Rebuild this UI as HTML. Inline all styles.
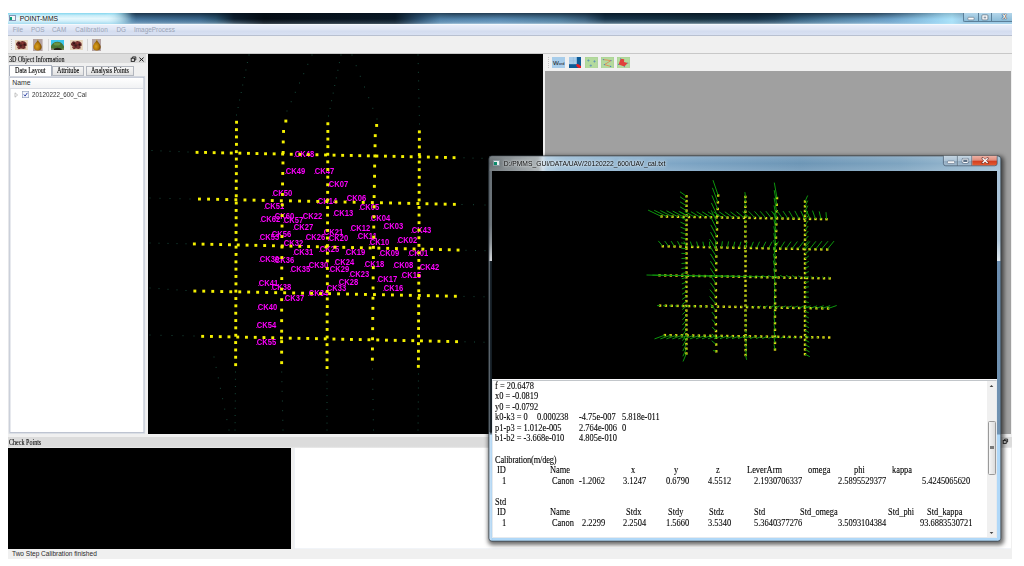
<!DOCTYPE html><html><head><meta charset="utf-8"><title>POINT-MMS</title><style>
*{margin:0;padding:0;box-sizing:border-box}
html,body{width:1024px;height:566px;overflow:hidden;background:#fff}
body{position:relative;font-family:"Liberation Sans",sans-serif;font-size:6.5px;color:#000}
.a{position:absolute}
.sf{font-family:"Liberation Serif",serif}
.t{position:absolute;white-space:pre;line-height:1;transform-origin:0 50%}
#txt span{position:absolute;white-space:pre;font-family:"Liberation Serif",serif;font-size:9.6px;line-height:10px;color:#000;-webkit-text-stroke:.1px #000;transform-origin:0 80%;transform:scaleX(.875)}

.lb i{font-style:normal;font-weight:normal;margin-right:-1.1px;margin-left:.8px}
.lb{position:absolute;white-space:pre;font-family:"Liberation Sans",sans-serif;font-size:9.1px;line-height:8px;font-weight:bold;color:#f0f;transform-origin:0 0;transform:scaleX(.835);letter-spacing:0}
</style></head><body>
<div class="a" style="left:8px;top:12.5px;width:1003.5px;height:546.5px;background:#f0f0f0"></div>
<div class="a" style="left:8px;top:12.5px;width:1003.5px;height:11.6px;background:linear-gradient(90deg,#c8ecf8 0.0px,#d8f2fa 52.0px,#c0e8f6 100.0px,#86bcd4 113.0px,#44739a 128.0px,#3a678c 192.0px,#2a5470 208.0px,#0e2030 226.0px,#050c14 256.0px,#0a1a28 387.0px,#2c5272 412.0px,#4f80a6 432.0px,#5688b0 492.0px,#4a7898 552.0px,#3a5f7c 577.0px,#17344a 597.0px,#15303f 692.0px,#17344a 747.0px,#1f4058 767.0px,#34607f 792.0px,#4f80a2 828.0px,#6aa0c8 882.0px,#98d2f0 927.0px,#aae2f9 944.0px,#9ccbe6 955.0px,#9ccbe6 1003.5px)"></div>
<div class="a" style="left:114px;top:12.5px;width:897.5px;height:11.6px;background:linear-gradient(180deg,rgba(0,10,20,.6) 0,rgba(0,10,20,.3) 25%,rgba(0,0,0,0) 55%,rgba(190,220,240,.28) 85%,rgba(225,240,250,.6) 100%);-webkit-mask-image:linear-gradient(90deg,transparent 0,#000 22px,#000 110px,rgba(0,0,0,.5) 150px,rgba(0,0,0,.5) 285px,#000 340px,#000 760px,rgba(0,0,0,.3) 830px,rgba(0,0,0,.3) 100%);mask-image:linear-gradient(90deg,transparent 0,#000 22px,#000 110px,rgba(0,0,0,.5) 150px,rgba(0,0,0,.5) 285px,#000 340px,#000 760px,rgba(0,0,0,.3) 830px,rgba(0,0,0,.3) 100%)"></div>
<div class="a" style="left:8px;top:12.5px;width:135px;height:11.6px;background:linear-gradient(180deg,#84d6ee 0,#c4ecf8 22%,#e6f7fc 50%,#d4f0fa 72%,#a6dcf0 100%);-webkit-mask-image:linear-gradient(90deg,#000 0,#000 98px,transparent 124px);mask-image:linear-gradient(90deg,#000 0,#000 98px,transparent 124px)"></div>
<div class="a" style="left:8px;top:23.7px;width:1003.5px;height:.6px;background:#9aa6ae"></div><div class="a" style="left:8px;top:24.2px;width:1003.5px;height:.5px;background:#f4f8fc"></div>
<div class="a" style="left:8.5px;top:15.2px;width:7.6px;height:6.2px;background:#f2f6f8;border:.7px solid #8492b4;border-top-width:1.1px"></div><div class="a" style="left:9.7px;top:17px;width:2.8px;height:3.4px;background:#0a9a78"></div>
<div class="t" style="left:19.8px;top:15.5px;font-size:6.75px;color:#111;text-shadow:0 0 2px #fff">POINT-MMS</div>
<div class="a" style="left:963px;top:12.8px;width:48.5px;height:9.4px;border:.5px solid #5b7f99;border-top:0;border-right:0;border-radius:0 0 0 2px;background:linear-gradient(180deg,#b4d6ea,#8cbcd8)"></div>
<div class="a" style="left:978px;top:12.8px;width:.5px;height:9.4px;background:#5b7f99"></div><div class="a" style="left:991.4px;top:12.8px;width:.5px;height:9.4px;background:#5b7f99"></div>
<svg class="a" style="left:963px;top:12.5px" width="48" height="11" viewBox="0 0 48 11"><rect x="4.9" y="4.3" width="6.2" height="2.6" rx=".8" fill="#fff" stroke="#5a6a7a" stroke-width=".6"/><rect x="18.9" y="1.9" width="6" height="5" rx=".8" fill="#fff" stroke="#5a6a7a" stroke-width=".7"/><rect x="20.6" y="3.6" width="2.6" height="1.8" fill="#8a9aaa"/></svg>
<div class="t" style="left:1002px;top:14.2px;font-size:6.6px;font-weight:bold;color:#fff;text-shadow:0 0 1px #334,0 0 1px #334,0 0 1px #334">X</div>
<div class="a" style="left:8px;top:24.5px;width:1003.5px;height:11px;background:linear-gradient(180deg,#e9eefa 0,#dde4f3 45%,#d3dcef 55%,#dbe3f4 100%)"></div>
<div class="a" style="left:8px;top:35px;width:1003.5px;height:.6px;background:#b8c0d0"></div>
<div class="t" style="left:12.7px;top:26.6px;font-size:6.4px;color:#9aa4b6">File</div>
<div class="t" style="left:31.1px;top:26.6px;font-size:6.4px;color:#9aa4b6">POS</div>
<div class="t" style="left:52px;top:26.6px;font-size:6.4px;color:#9aa4b6">CAM</div>
<div class="t" style="left:75.2px;top:26.6px;font-size:6.4px;color:#9aa4b6"><span style="letter-spacing:.2px">Calibration</span></div>
<div class="t" style="left:116.5px;top:26.6px;font-size:6.4px;color:#9aa4b6">DG</div>
<div class="t" style="left:134px;top:26.6px;font-size:6.4px;color:#9aa4b6">ImageProcess</div>
<div class="a" style="left:8px;top:53.2px;width:1003.5px;height:.6px;background:#c8c8c8"></div>
<div class="a" style="left:10.5px;top:39px;width:1px;height:12px;background:repeating-linear-gradient(180deg,#c4c4c4 0 1px,transparent 1px 2px)"></div>
<svg class="a" style="left:15.3px;top:39.8px" width="12.8" height="10" viewBox="0 0 12.8 10"><defs><filter id="bl15" x="-10%" y="-10%" width="120%" height="120%"><feGaussianBlur stdDeviation=".35"/></filter></defs><rect width="12.8" height="10" fill="#e6d4ba"/><g filter="url(#bl15)"><path d="M1.2 3.2L3 1.2L5.4 1.8L7.2 .9L9.6 1.6L11.4 3L11.8 5.4L10.2 6.6L10.8 8.2L8.4 9L6 8.4L3.8 9.2L2.2 7.8L2.8 6.2L1 5Z" fill="#6a2c2a"/><circle cx="4" cy="3.4" r="1.1" fill="#3a1818"/><circle cx="7.6" cy="3" r="1" fill="#8a3a34"/><circle cx="9.6" cy="4.6" r="1.1" fill="#351515"/><circle cx="5.6" cy="5.6" r="1.2" fill="#40201e"/><circle cx="7.8" cy="7" r="1" fill="#7a3430"/><circle cx="3.6" cy="7" r=".9" fill="#8c4038"/><circle cx="6" cy="2.6" r=".6" fill="#a05048"/><circle cx="10.4" cy="2.8" r=".5" fill="#a55"/></g></svg>
<svg class="a" style="left:33.2px;top:38.6px" width="9.6" height="12" viewBox="0 0 9.6 12"><defs><radialGradient id="pg33" cx=".4" cy=".62" r=".55"><stop offset="0" stop-color="#d9a020"/><stop offset=".6" stop-color="#b47a0a"/><stop offset="1" stop-color="#7c4c04"/></radialGradient></defs><rect width="9.6" height="12" fill="#b4a4a4"/><path d="M4.8 .9 C5.5 2.6 8.7 4.8 8.7 8 C8.7 10.4 6.9 11.5 4.8 11.5 C2.7 11.5 .9 10.4 .9 8 C.9 4.8 4.1 2.6 4.8 .9Z" fill="url(#pg33)"/><path d="M4.8 .6L4.8 2" stroke="#c8a020" stroke-width=".8"/></svg>
<svg class="a" style="left:51px;top:39.8px" width="13" height="9.8" viewBox="0 0 13 9.8"><defs><filter id="bb" x="-10%" y="-10%" width="120%" height="120%"><feGaussianBlur stdDeviation=".3"/></filter></defs><rect width="13" height="9.8" fill="#3cc6ee"/><g filter="url(#bb)"><path d="M-.5 10 L-.5 7 C.8 3.4 3.6 1.6 6.8 1.7 C10 1.8 12.6 4.4 13.5 7.6 L13.5 10Z" fill="#4a7434"/><ellipse cx="6" cy="4" rx="3.4" ry="1.5" fill="#6a9444"/><path d="M2.4 10 C3.4 7.2 9.4 7 11 10Z" fill="#2a2018"/><path d="M-.5 10L-.5 8.2L2.4 8.6L3 10Z" fill="#8a8878"/><path d="M10.5 10L11.4 8.4L13.5 8.2L13.5 10Z" fill="#7a8a5a"/></g></svg>
<svg class="a" style="left:70.4px;top:39.8px" width="12.8" height="10" viewBox="0 0 12.8 10"><defs><filter id="bl70" x="-10%" y="-10%" width="120%" height="120%"><feGaussianBlur stdDeviation=".35"/></filter></defs><rect width="12.8" height="10" fill="#e6d4ba"/><g filter="url(#bl70)"><path d="M1.2 3.2L3 1.2L5.4 1.8L7.2 .9L9.6 1.6L11.4 3L11.8 5.4L10.2 6.6L10.8 8.2L8.4 9L6 8.4L3.8 9.2L2.2 7.8L2.8 6.2L1 5Z" fill="#6a2c2a"/><circle cx="4" cy="3.4" r="1.1" fill="#3a1818"/><circle cx="7.6" cy="3" r="1" fill="#8a3a34"/><circle cx="9.6" cy="4.6" r="1.1" fill="#351515"/><circle cx="5.6" cy="5.6" r="1.2" fill="#40201e"/><circle cx="7.8" cy="7" r="1" fill="#7a3430"/><circle cx="3.6" cy="7" r=".9" fill="#8c4038"/><circle cx="6" cy="2.6" r=".6" fill="#a05048"/><circle cx="10.4" cy="2.8" r=".5" fill="#a55"/></g></svg>
<svg class="a" style="left:91.6px;top:38.6px" width="9.6" height="12" viewBox="0 0 9.6 12"><defs><radialGradient id="pg91" cx=".4" cy=".62" r=".55"><stop offset="0" stop-color="#d9a020"/><stop offset=".6" stop-color="#b47a0a"/><stop offset="1" stop-color="#7c4c04"/></radialGradient></defs><rect width="9.6" height="12" fill="#b4a4a4"/><path d="M4.8 .9 C5.5 2.6 8.7 4.8 8.7 8 C8.7 10.4 6.9 11.5 4.8 11.5 C2.7 11.5 .9 10.4 .9 8 C.9 4.8 4.1 2.6 4.8 .9Z" fill="url(#pg91)"/><path d="M4.8 .6L4.8 2" stroke="#c8a020" stroke-width=".8"/></svg>
<div class="a" style="left:47.5px;top:39px;width:.6px;height:12px;background:#d4d4d4"></div>
<div class="a" style="left:87px;top:39px;width:.6px;height:12px;background:#d4d4d4"></div>
<div class="a" style="left:8px;top:53.8px;width:138.4px;height:9.6px;background:#dddddd"></div>
<div class="t sf" style="left:9.4px;top:57px;font-size:7.2px;transform:scaleX(.845);color:#000;-webkit-text-stroke:.08px #000">3D Object Information</div>
<svg class="a" style="left:130px;top:55.5px" width="15" height="7" viewBox="0 0 15 7"><rect x="1.2" y="2.2" width="3.2" height="3.2" fill="none" stroke="#222" stroke-width=".9"/><path d="M2.6 2.2V.9H5.8V4H4.4" fill="none" stroke="#222" stroke-width=".9"/><path d="M9.4 1.6L13.6 5.4M13.6 1.6L9.4 5.4" stroke="#111" stroke-width=".95"/></svg>
<div class="a" style="left:8.8px;top:64.8px;width:43px;height:12px;background:#fff;border:.6px solid #a9b0bd;border-bottom:0"></div>
<div class="a" style="left:52.4px;top:66.2px;width:32px;height:9.4px;background:linear-gradient(#f6f6f6,#e2e2e2);border:.6px solid #b2b6be"></div>
<div class="a" style="left:85.8px;top:66.2px;width:47.8px;height:9.4px;background:linear-gradient(#f6f6f6,#e2e2e2);border:.6px solid #b2b6be"></div>
<div class="t sf" style="left:14.5px;top:66.7px;font-size:7.6px;transform:scaleX(.81);color:#000;-webkit-text-stroke:.12px #000">Data Layout</div>
<div class="t sf" style="left:57.2px;top:67.1px;font-size:7.6px;transform:scaleX(.81);color:#000;-webkit-text-stroke:.12px #000">Attritube</div>
<div class="t sf" style="left:91.4px;top:67.1px;font-size:7.6px;transform:scaleX(.795);color:#000;-webkit-text-stroke:.12px #000">Analysis Points</div>
<svg class="a" style="left:0;top:0" width="160" height="440" viewBox="0 0 160 440"><rect x="9.1" y="76.5" width="135.6" height="356.8" fill="#fff" stroke="#d3d8e1" stroke-width=".9"/><rect x="9.9" y="77.3" width="134" height="355.2" fill="#fff" stroke="#aeb6c6" stroke-width=".8"/></svg>
<div class="a" style="left:10.4px;top:77.8px;width:133px;height:10.8px;background:linear-gradient(#fff,#f1f2f4);border-bottom:.6px solid #d9dce3"></div>
<div class="t" style="left:12.3px;top:79.6px;font-size:6.9px;color:#333">Name</div>
<svg class="a" style="left:13.5px;top:91.5px" width="5" height="6" viewBox="0 0 5 6"><path d="M1 .8L3.6 3L1 5.2Z" fill="#fff" stroke="#a0a0a0" stroke-width=".6"/></svg>
<svg class="a" style="left:21px;top:90px" width="9" height="9" viewBox="0 0 9 9"><rect x="1.3" y="1.3" width="6.4" height="6.4" fill="#e9eef7" stroke="#8e9cb6" stroke-width=".6"/><rect x="2.2" y="2.2" width="4.6" height="4.6" fill="#f6f8fc"/></svg>
<svg class="a" style="left:22px;top:91px" width="7" height="7" viewBox="0 0 7 7"><path d="M1.9 3.5L3.1 5.1L5.3 1.9" fill="none" stroke="#2a3fa8" stroke-width=".95"/></svg>
<div class="t" style="left:32.2px;top:90.9px;font-size:7px;transform:scaleX(.895);color:#333">20120222_600_Cal</div>
<div class="a" style="left:148.2px;top:54px;width:395px;height:379.6px;background:#000;overflow:hidden" id="v3d">
<div class="a" style="left:0;top:0;width:395px;height:379.6px;will-change:transform"><div class="lb" style="left:145.4px;top:96.1px"><i>.</i>CK48</div><div class="lb" style="left:136.4px;top:113.3px"><i>.</i>CK49</div><div class="lb" style="left:164.5px;top:113.3px"><i>.</i>CK47</div><div class="lb" style="left:179.1px;top:125.9px"><i>.</i>CK07</div><div class="lb" style="left:123.1px;top:134.8px"><i>.</i>CK50</div><div class="lb" style="left:167.7px;top:142.8px"><i>.</i>CK14</div><div class="lb" style="left:115.2px;top:148.2px"><i>.</i>CK51</div><div class="lb" style="left:152.6px;top:157.7px"><i>.</i>CK22</div><div class="lb" style="left:183.6px;top:155.4px"><i>.</i>CK13</div><div class="lb" style="left:111.1px;top:160.8px"><i>.</i>CK62</div><div class="lb" style="left:125.0px;top:158.4px"><i>.</i>CK60</div><div class="lb" style="left:134.0px;top:161.6px"><i>.</i>CK57</div><div class="lb" style="left:144.4px;top:169.1px"><i>.</i>CK27</div><div class="lb" style="left:174.3px;top:173.8px"><i>.</i>CK21</div><div class="lb" style="left:121.8px;top:175.9px"><i>.</i>CK56</div><div class="lb" style="left:110.4px;top:178.8px"><i>.</i>CK53</div><div class="lb" style="left:156.0px;top:178.8px"><i>.</i>CK26</div><div class="lb" style="left:179.1px;top:179.9px"><i>.</i>CK20</div><div class="lb" style="left:133.8px;top:184.8px"><i>.</i>CK32</div><div class="lb" style="left:144.0px;top:193.8px"><i>.</i>CK31</div><div class="lb" style="left:169.8px;top:191.4px"><i>.</i>CK25</div><div class="lb" style="left:110.1px;top:200.9px"><i>.</i>CK39</div><div class="lb" style="left:124.6px;top:201.6px"><i>.</i>CK36</div><div class="lb" style="left:158.9px;top:207.1px"><i>.</i>CK30</div><div class="lb" style="left:140.7px;top:211.1px"><i>.</i>CK35</div><div class="lb" style="left:180.1px;top:211.2px"><i>.</i>CK29</div><div class="lb" style="left:185.4px;top:204.1px"><i>.</i>CK24</div><div class="lb" style="left:108.7px;top:225.4px"><i>.</i>CK41</div><div class="lb" style="left:122.3px;top:228.9px"><i>.</i>CK38</div><div class="lb" style="left:177.3px;top:229.6px"><i>.</i>CK33</div><div class="lb" style="left:188.7px;top:224.2px"><i>.</i>CK28</div><div class="lb" style="left:159.4px;top:234.9px"><i>.</i>CK34</div><div class="lb" style="left:134.5px;top:240.4px"><i>.</i>CK37</div><div class="lb" style="left:108.0px;top:249.1px"><i>.</i>CK40</div><div class="lb" style="left:107.1px;top:267.2px"><i>.</i>CK54</div><div class="lb" style="left:106.9px;top:284.1px"><i>.</i>CK55</div><div class="lb" style="left:196.9px;top:139.8px"><i>.</i>CK06</div><div class="lb" style="left:210.2px;top:149.3px"><i>.</i>CK05</div><div class="lb" style="left:221.1px;top:160.1px"><i>.</i>CK04</div><div class="lb" style="left:201.0px;top:169.6px"><i>.</i>CK12</div><div class="lb" style="left:233.5px;top:168.4px"><i>.</i>CK03</div><div class="lb" style="left:262.4px;top:172.2px"><i>.</i>CK43</div><div class="lb" style="left:208.4px;top:178.1px"><i>.</i>CK11</div><div class="lb" style="left:219.7px;top:184.2px"><i>.</i>CK10</div><div class="lb" style="left:248.1px;top:181.8px"><i>.</i>CK02</div><div class="lb" style="left:195.6px;top:193.6px"><i>.</i>CK19</div><div class="lb" style="left:230.1px;top:194.7px"><i>.</i>CK09</div><div class="lb" style="left:258.8px;top:194.7px"><i>.</i>CK01</div><div class="lb" style="left:214.6px;top:205.6px"><i>.</i>CK18</div><div class="lb" style="left:244.1px;top:206.6px"><i>.</i>CK08</div><div class="lb" style="left:270.1px;top:209.2px"><i>.</i>CK42</div><div class="lb" style="left:200.4px;top:215.9px"><i>.</i>CK23</div><div class="lb" style="left:252.1px;top:216.9px"><i>.</i>CK15</div><div class="lb" style="left:227.7px;top:220.9px"><i>.</i>CK17</div><div class="lb" style="left:234.1px;top:229.6px"><i>.</i>CK16</div></div>
<svg class="a" style="left:-148.2px;top:-54px" width="1024" height="566" viewBox="0 0 1024 566">
<g fill="#f4f000"><rect x="195.6" y="150.9" width="2.9" height="2.9"/><rect x="204.1" y="151.0" width="2.9" height="2.9"/><rect x="212.7" y="151.2" width="2.9" height="2.9"/><rect x="221.2" y="151.4" width="2.9" height="2.9"/><rect x="229.8" y="151.6" width="2.9" height="2.9"/><rect x="238.4" y="151.7" width="2.9" height="2.9"/><rect x="247.0" y="151.9" width="2.9" height="2.9"/><rect x="255.5" y="152.1" width="2.9" height="2.9"/><rect x="264.1" y="152.3" width="2.9" height="2.9"/><rect x="272.7" y="152.4" width="2.9" height="2.9"/><rect x="281.2" y="152.6" width="2.9" height="2.9"/><rect x="289.8" y="152.8" width="2.9" height="2.9"/><rect x="298.4" y="153.0" width="2.9" height="2.9"/><rect x="306.9" y="153.1" width="2.9" height="2.9"/><rect x="315.5" y="153.3" width="2.9" height="2.9"/><rect x="324.1" y="153.5" width="2.9" height="2.9"/><rect x="332.6" y="153.7" width="2.9" height="2.9"/><rect x="341.2" y="153.9" width="2.9" height="2.9"/><rect x="349.8" y="154.0" width="2.9" height="2.9"/><rect x="358.3" y="154.2" width="2.9" height="2.9"/><rect x="366.9" y="154.4" width="2.9" height="2.9"/><rect x="375.4" y="154.6" width="2.9" height="2.9"/><rect x="384.0" y="154.7" width="2.9" height="2.9"/><rect x="392.6" y="154.9" width="2.9" height="2.9"/><rect x="401.2" y="155.1" width="2.9" height="2.9"/><rect x="409.7" y="155.3" width="2.9" height="2.9"/><rect x="418.3" y="155.4" width="2.9" height="2.9"/><rect x="426.9" y="155.6" width="2.9" height="2.9"/><rect x="435.4" y="155.8" width="2.9" height="2.9"/><rect x="444.0" y="156.0" width="2.9" height="2.9"/><rect x="452.6" y="156.2" width="2.9" height="2.9"/><rect x="198.0" y="197.6" width="2.9" height="2.9"/><rect x="207.1" y="197.7" width="2.9" height="2.9"/><rect x="216.2" y="197.9" width="2.9" height="2.9"/><rect x="225.3" y="198.1" width="2.9" height="2.9"/><rect x="234.4" y="198.3" width="2.9" height="2.9"/><rect x="243.5" y="198.5" width="2.9" height="2.9"/><rect x="252.6" y="198.7" width="2.9" height="2.9"/><rect x="261.7" y="198.9" width="2.9" height="2.9"/><rect x="270.8" y="199.1" width="2.9" height="2.9"/><rect x="279.9" y="199.3" width="2.9" height="2.9"/><rect x="289.0" y="199.4" width="2.9" height="2.9"/><rect x="298.1" y="199.6" width="2.9" height="2.9"/><rect x="307.2" y="199.8" width="2.9" height="2.9"/><rect x="316.3" y="200.0" width="2.9" height="2.9"/><rect x="325.4" y="200.2" width="2.9" height="2.9"/><rect x="334.5" y="200.4" width="2.9" height="2.9"/><rect x="343.6" y="200.6" width="2.9" height="2.9"/><rect x="352.7" y="200.8" width="2.9" height="2.9"/><rect x="361.8" y="201.0" width="2.9" height="2.9"/><rect x="370.9" y="201.1" width="2.9" height="2.9"/><rect x="380.0" y="201.3" width="2.9" height="2.9"/><rect x="389.1" y="201.5" width="2.9" height="2.9"/><rect x="398.2" y="201.7" width="2.9" height="2.9"/><rect x="407.3" y="201.9" width="2.9" height="2.9"/><rect x="416.4" y="202.1" width="2.9" height="2.9"/><rect x="425.5" y="202.3" width="2.9" height="2.9"/><rect x="434.6" y="202.5" width="2.9" height="2.9"/><rect x="443.7" y="202.7" width="2.9" height="2.9"/><rect x="452.9" y="202.9" width="2.9" height="2.9"/><rect x="192.9" y="242.5" width="2.9" height="2.9"/><rect x="201.6" y="242.7" width="2.9" height="2.9"/><rect x="210.4" y="242.9" width="2.9" height="2.9"/><rect x="219.2" y="243.1" width="2.9" height="2.9"/><rect x="228.0" y="243.3" width="2.9" height="2.9"/><rect x="236.8" y="243.5" width="2.9" height="2.9"/><rect x="245.6" y="243.7" width="2.9" height="2.9"/><rect x="254.4" y="243.9" width="2.9" height="2.9"/><rect x="263.2" y="244.1" width="2.9" height="2.9"/><rect x="272.0" y="244.3" width="2.9" height="2.9"/><rect x="280.8" y="244.5" width="2.9" height="2.9"/><rect x="289.5" y="244.7" width="2.9" height="2.9"/><rect x="298.3" y="244.9" width="2.9" height="2.9"/><rect x="307.1" y="245.1" width="2.9" height="2.9"/><rect x="315.9" y="245.3" width="2.9" height="2.9"/><rect x="324.7" y="245.5" width="2.9" height="2.9"/><rect x="333.5" y="245.7" width="2.9" height="2.9"/><rect x="342.3" y="245.9" width="2.9" height="2.9"/><rect x="351.1" y="246.1" width="2.9" height="2.9"/><rect x="359.9" y="246.3" width="2.9" height="2.9"/><rect x="368.7" y="246.5" width="2.9" height="2.9"/><rect x="377.4" y="246.7" width="2.9" height="2.9"/><rect x="386.2" y="246.9" width="2.9" height="2.9"/><rect x="395.0" y="247.1" width="2.9" height="2.9"/><rect x="403.8" y="247.3" width="2.9" height="2.9"/><rect x="412.6" y="247.5" width="2.9" height="2.9"/><rect x="421.4" y="247.7" width="2.9" height="2.9"/><rect x="430.2" y="247.9" width="2.9" height="2.9"/><rect x="439.0" y="248.1" width="2.9" height="2.9"/><rect x="447.8" y="248.3" width="2.9" height="2.9"/><rect x="456.6" y="248.6" width="2.9" height="2.9"/><rect x="193.4" y="289.6" width="2.9" height="2.9"/><rect x="202.3" y="289.7" width="2.9" height="2.9"/><rect x="211.3" y="289.9" width="2.9" height="2.9"/><rect x="220.3" y="290.1" width="2.9" height="2.9"/><rect x="229.3" y="290.3" width="2.9" height="2.9"/><rect x="238.3" y="290.4" width="2.9" height="2.9"/><rect x="247.2" y="290.6" width="2.9" height="2.9"/><rect x="256.2" y="290.8" width="2.9" height="2.9"/><rect x="265.2" y="291.0" width="2.9" height="2.9"/><rect x="274.2" y="291.2" width="2.9" height="2.9"/><rect x="283.2" y="291.3" width="2.9" height="2.9"/><rect x="292.2" y="291.5" width="2.9" height="2.9"/><rect x="301.1" y="291.7" width="2.9" height="2.9"/><rect x="310.1" y="291.9" width="2.9" height="2.9"/><rect x="319.1" y="292.1" width="2.9" height="2.9"/><rect x="328.1" y="292.2" width="2.9" height="2.9"/><rect x="337.1" y="292.4" width="2.9" height="2.9"/><rect x="346.1" y="292.6" width="2.9" height="2.9"/><rect x="355.0" y="292.8" width="2.9" height="2.9"/><rect x="364.0" y="293.0" width="2.9" height="2.9"/><rect x="373.0" y="293.1" width="2.9" height="2.9"/><rect x="382.0" y="293.3" width="2.9" height="2.9"/><rect x="391.0" y="293.5" width="2.9" height="2.9"/><rect x="400.0" y="293.7" width="2.9" height="2.9"/><rect x="408.9" y="293.9" width="2.9" height="2.9"/><rect x="417.9" y="294.0" width="2.9" height="2.9"/><rect x="426.9" y="294.2" width="2.9" height="2.9"/><rect x="435.9" y="294.4" width="2.9" height="2.9"/><rect x="444.9" y="294.6" width="2.9" height="2.9"/><rect x="453.9" y="294.8" width="2.9" height="2.9"/><rect x="201.2" y="334.9" width="2.9" height="2.9"/><rect x="210.0" y="335.0" width="2.9" height="2.9"/><rect x="218.8" y="335.2" width="2.9" height="2.9"/><rect x="227.5" y="335.4" width="2.9" height="2.9"/><rect x="236.3" y="335.6" width="2.9" height="2.9"/><rect x="245.0" y="335.8" width="2.9" height="2.9"/><rect x="253.8" y="335.9" width="2.9" height="2.9"/><rect x="262.5" y="336.1" width="2.9" height="2.9"/><rect x="271.3" y="336.3" width="2.9" height="2.9"/><rect x="280.0" y="336.5" width="2.9" height="2.9"/><rect x="288.8" y="336.7" width="2.9" height="2.9"/><rect x="297.5" y="336.9" width="2.9" height="2.9"/><rect x="306.3" y="337.0" width="2.9" height="2.9"/><rect x="315.0" y="337.2" width="2.9" height="2.9"/><rect x="323.8" y="337.4" width="2.9" height="2.9"/><rect x="332.5" y="337.6" width="2.9" height="2.9"/><rect x="341.3" y="337.8" width="2.9" height="2.9"/><rect x="350.0" y="338.0" width="2.9" height="2.9"/><rect x="358.8" y="338.1" width="2.9" height="2.9"/><rect x="367.5" y="338.3" width="2.9" height="2.9"/><rect x="376.3" y="338.5" width="2.9" height="2.9"/><rect x="385.0" y="338.7" width="2.9" height="2.9"/><rect x="393.8" y="338.9" width="2.9" height="2.9"/><rect x="402.5" y="339.1" width="2.9" height="2.9"/><rect x="411.3" y="339.2" width="2.9" height="2.9"/><rect x="420.0" y="339.4" width="2.9" height="2.9"/><rect x="428.8" y="339.6" width="2.9" height="2.9"/><rect x="437.5" y="339.8" width="2.9" height="2.9"/><rect x="446.3" y="340.0" width="2.9" height="2.9"/><rect x="455.1" y="340.2" width="2.9" height="2.9"/><rect x="235.1" y="120.8" width="2.9" height="2.9"/><rect x="235.0" y="128.2" width="2.9" height="2.9"/><rect x="235.0" y="135.5" width="2.9" height="2.9"/><rect x="235.0" y="142.9" width="2.9" height="2.9"/><rect x="234.9" y="150.2" width="2.9" height="2.9"/><rect x="234.9" y="157.6" width="2.9" height="2.9"/><rect x="234.9" y="164.9" width="2.9" height="2.9"/><rect x="234.9" y="172.2" width="2.9" height="2.9"/><rect x="234.8" y="179.6" width="2.9" height="2.9"/><rect x="234.8" y="186.9" width="2.9" height="2.9"/><rect x="234.8" y="194.3" width="2.9" height="2.9"/><rect x="234.8" y="201.6" width="2.9" height="2.9"/><rect x="234.7" y="209.0" width="2.9" height="2.9"/><rect x="234.7" y="216.3" width="2.9" height="2.9"/><rect x="234.7" y="223.6" width="2.9" height="2.9"/><rect x="234.6" y="231.0" width="2.9" height="2.9"/><rect x="234.6" y="238.3" width="2.9" height="2.9"/><rect x="234.6" y="245.7" width="2.9" height="2.9"/><rect x="234.6" y="253.0" width="2.9" height="2.9"/><rect x="234.5" y="260.4" width="2.9" height="2.9"/><rect x="234.5" y="267.7" width="2.9" height="2.9"/><rect x="234.5" y="275.0" width="2.9" height="2.9"/><rect x="234.5" y="282.4" width="2.9" height="2.9"/><rect x="234.4" y="289.7" width="2.9" height="2.9"/><rect x="234.4" y="297.1" width="2.9" height="2.9"/><rect x="234.4" y="304.4" width="2.9" height="2.9"/><rect x="234.3" y="311.8" width="2.9" height="2.9"/><rect x="234.3" y="319.1" width="2.9" height="2.9"/><rect x="234.3" y="326.4" width="2.9" height="2.9"/><rect x="234.3" y="333.8" width="2.9" height="2.9"/><rect x="234.2" y="341.1" width="2.9" height="2.9"/><rect x="234.2" y="348.5" width="2.9" height="2.9"/><rect x="234.2" y="355.8" width="2.9" height="2.9"/><rect x="234.2" y="363.2" width="2.9" height="2.9"/><rect x="284.4" y="119.6" width="2.9" height="2.9"/><rect x="282.1" y="130.0" width="2.9" height="2.9"/><rect x="281.8" y="140.5" width="2.9" height="2.9"/><rect x="281.7" y="151.0" width="2.9" height="2.9"/><rect x="281.5" y="161.5" width="2.9" height="2.9"/><rect x="281.3" y="172.0" width="2.9" height="2.9"/><rect x="281.1" y="182.5" width="2.9" height="2.9"/><rect x="281.0" y="193.0" width="2.9" height="2.9"/><rect x="280.9" y="203.5" width="2.9" height="2.9"/><rect x="280.7" y="214.1" width="2.9" height="2.9"/><rect x="280.6" y="224.6" width="2.9" height="2.9"/><rect x="280.5" y="235.1" width="2.9" height="2.9"/><rect x="280.5" y="245.6" width="2.9" height="2.9"/><rect x="280.4" y="256.1" width="2.9" height="2.9"/><rect x="280.3" y="266.6" width="2.9" height="2.9"/><rect x="280.3" y="277.1" width="2.9" height="2.9"/><rect x="280.2" y="287.7" width="2.9" height="2.9"/><rect x="280.2" y="298.2" width="2.9" height="2.9"/><rect x="280.2" y="308.7" width="2.9" height="2.9"/><rect x="280.2" y="319.2" width="2.9" height="2.9"/><rect x="280.2" y="329.7" width="2.9" height="2.9"/><rect x="280.2" y="340.2" width="2.9" height="2.9"/><rect x="280.2" y="350.7" width="2.9" height="2.9"/><rect x="280.2" y="361.2" width="2.9" height="2.9"/><rect x="326.4" y="122.3" width="2.9" height="2.9"/><rect x="326.4" y="130.0" width="2.9" height="2.9"/><rect x="326.4" y="137.6" width="2.9" height="2.9"/><rect x="326.4" y="145.2" width="2.9" height="2.9"/><rect x="326.3" y="152.8" width="2.9" height="2.9"/><rect x="326.3" y="160.4" width="2.9" height="2.9"/><rect x="326.3" y="168.0" width="2.9" height="2.9"/><rect x="326.3" y="175.7" width="2.9" height="2.9"/><rect x="326.2" y="183.3" width="2.9" height="2.9"/><rect x="326.2" y="190.9" width="2.9" height="2.9"/><rect x="326.2" y="198.5" width="2.9" height="2.9"/><rect x="326.1" y="206.1" width="2.9" height="2.9"/><rect x="326.1" y="213.7" width="2.9" height="2.9"/><rect x="326.1" y="221.4" width="2.9" height="2.9"/><rect x="326.1" y="229.0" width="2.9" height="2.9"/><rect x="326.0" y="236.6" width="2.9" height="2.9"/><rect x="326.0" y="244.2" width="2.9" height="2.9"/><rect x="326.0" y="251.8" width="2.9" height="2.9"/><rect x="325.9" y="259.4" width="2.9" height="2.9"/><rect x="325.9" y="267.0" width="2.9" height="2.9"/><rect x="325.9" y="274.7" width="2.9" height="2.9"/><rect x="325.9" y="282.3" width="2.9" height="2.9"/><rect x="325.8" y="289.9" width="2.9" height="2.9"/><rect x="325.8" y="297.5" width="2.9" height="2.9"/><rect x="325.8" y="305.1" width="2.9" height="2.9"/><rect x="325.7" y="312.7" width="2.9" height="2.9"/><rect x="325.7" y="320.4" width="2.9" height="2.9"/><rect x="325.7" y="328.0" width="2.9" height="2.9"/><rect x="325.7" y="335.6" width="2.9" height="2.9"/><rect x="325.6" y="343.2" width="2.9" height="2.9"/><rect x="325.6" y="350.8" width="2.9" height="2.9"/><rect x="325.6" y="358.4" width="2.9" height="2.9"/><rect x="325.6" y="366.1" width="2.9" height="2.9"/><rect x="375.2" y="124.0" width="2.9" height="2.9"/><rect x="373.8" y="134.2" width="2.9" height="2.9"/><rect x="373.6" y="144.3" width="2.9" height="2.9"/><rect x="373.4" y="154.5" width="2.9" height="2.9"/><rect x="373.2" y="164.6" width="2.9" height="2.9"/><rect x="373.1" y="174.8" width="2.9" height="2.9"/><rect x="372.9" y="184.9" width="2.9" height="2.9"/><rect x="372.7" y="195.1" width="2.9" height="2.9"/><rect x="372.6" y="205.3" width="2.9" height="2.9"/><rect x="372.5" y="215.4" width="2.9" height="2.9"/><rect x="372.3" y="225.6" width="2.9" height="2.9"/><rect x="372.2" y="235.7" width="2.9" height="2.9"/><rect x="372.0" y="245.9" width="2.9" height="2.9"/><rect x="371.9" y="256.1" width="2.9" height="2.9"/><rect x="371.8" y="266.2" width="2.9" height="2.9"/><rect x="371.7" y="276.4" width="2.9" height="2.9"/><rect x="371.6" y="286.5" width="2.9" height="2.9"/><rect x="371.5" y="296.7" width="2.9" height="2.9"/><rect x="371.4" y="306.9" width="2.9" height="2.9"/><rect x="371.3" y="317.0" width="2.9" height="2.9"/><rect x="371.2" y="327.2" width="2.9" height="2.9"/><rect x="371.1" y="337.3" width="2.9" height="2.9"/><rect x="371.0" y="347.5" width="2.9" height="2.9"/><rect x="370.9" y="357.7" width="2.9" height="2.9"/><rect x="417.9" y="130.4" width="2.9" height="2.9"/><rect x="417.9" y="137.9" width="2.9" height="2.9"/><rect x="417.9" y="145.5" width="2.9" height="2.9"/><rect x="417.9" y="153.1" width="2.9" height="2.9"/><rect x="417.8" y="160.6" width="2.9" height="2.9"/><rect x="417.8" y="168.2" width="2.9" height="2.9"/><rect x="417.8" y="175.8" width="2.9" height="2.9"/><rect x="417.7" y="183.3" width="2.9" height="2.9"/><rect x="417.7" y="190.9" width="2.9" height="2.9"/><rect x="417.7" y="198.5" width="2.9" height="2.9"/><rect x="417.6" y="206.0" width="2.9" height="2.9"/><rect x="417.6" y="213.6" width="2.9" height="2.9"/><rect x="417.6" y="221.2" width="2.9" height="2.9"/><rect x="417.5" y="228.7" width="2.9" height="2.9"/><rect x="417.5" y="236.3" width="2.9" height="2.9"/><rect x="417.5" y="243.9" width="2.9" height="2.9"/><rect x="417.4" y="251.4" width="2.9" height="2.9"/><rect x="417.4" y="259.0" width="2.9" height="2.9"/><rect x="417.4" y="266.6" width="2.9" height="2.9"/><rect x="417.3" y="274.1" width="2.9" height="2.9"/><rect x="417.3" y="281.7" width="2.9" height="2.9"/><rect x="417.3" y="289.3" width="2.9" height="2.9"/><rect x="417.2" y="296.8" width="2.9" height="2.9"/><rect x="417.2" y="304.4" width="2.9" height="2.9"/><rect x="417.2" y="312.0" width="2.9" height="2.9"/><rect x="417.1" y="319.5" width="2.9" height="2.9"/><rect x="417.1" y="327.1" width="2.9" height="2.9"/><rect x="417.1" y="334.7" width="2.9" height="2.9"/><rect x="417.0" y="342.2" width="2.9" height="2.9"/><rect x="417.0" y="349.8" width="2.9" height="2.9"/><rect x="417.0" y="357.4" width="2.9" height="2.9"/><rect x="416.9" y="364.9" width="2.9" height="2.9"/></g>
<g fill="#17483a"><rect x="235.0" y="371.5" width="1" height="1"/><rect x="234.9" y="378.8" width="1" height="1"/><rect x="234.9" y="386.0" width="1" height="1"/><rect x="234.8" y="393.2" width="1" height="1"/><rect x="234.8" y="400.5" width="1" height="1"/><rect x="234.7" y="407.8" width="1" height="1"/><rect x="234.6" y="415.0" width="1" height="1"/><rect x="234.6" y="422.2" width="1" height="1"/><rect x="234.5" y="429.5" width="1" height="1"/><rect x="281.2" y="371.5" width="1" height="1"/><rect x="281.4" y="381.2" width="1" height="1"/><rect x="281.6" y="390.8" width="1" height="1"/><rect x="281.9" y="400.5" width="1" height="1"/><rect x="282.1" y="410.2" width="1" height="1"/><rect x="282.3" y="419.8" width="1" height="1"/><rect x="282.5" y="429.5" width="1" height="1"/><rect x="326.5" y="374.5" width="1" height="1"/><rect x="326.5" y="381.4" width="1" height="1"/><rect x="326.5" y="388.2" width="1" height="1"/><rect x="326.5" y="395.1" width="1" height="1"/><rect x="326.5" y="402.0" width="1" height="1"/><rect x="326.5" y="408.9" width="1" height="1"/><rect x="326.5" y="415.8" width="1" height="1"/><rect x="326.5" y="422.6" width="1" height="1"/><rect x="326.5" y="429.5" width="1" height="1"/><rect x="372.0" y="368.5" width="1" height="1"/><rect x="372.2" y="378.7" width="1" height="1"/><rect x="372.3" y="388.8" width="1" height="1"/><rect x="372.5" y="399.0" width="1" height="1"/><rect x="372.7" y="409.2" width="1" height="1"/><rect x="372.8" y="419.3" width="1" height="1"/><rect x="373.0" y="429.5" width="1" height="1"/><rect x="418.0" y="373.5" width="1" height="1"/><rect x="417.9" y="380.5" width="1" height="1"/><rect x="417.9" y="387.5" width="1" height="1"/><rect x="417.8" y="394.5" width="1" height="1"/><rect x="417.8" y="401.5" width="1" height="1"/><rect x="417.7" y="408.5" width="1" height="1"/><rect x="417.6" y="415.5" width="1" height="1"/><rect x="417.6" y="422.5" width="1" height="1"/><rect x="417.5" y="429.5" width="1" height="1"/><rect x="213.5" y="356.5" width="1" height="1"/><rect x="215.6" y="366.9" width="1" height="1"/><rect x="217.8" y="377.4" width="1" height="1"/><rect x="219.9" y="387.8" width="1" height="1"/><rect x="222.1" y="398.2" width="1" height="1"/><rect x="224.2" y="408.6" width="1" height="1"/><rect x="226.4" y="419.1" width="1" height="1"/><rect x="228.5" y="429.5" width="1" height="1"/><rect x="236.0" y="114.5" width="1" height="1"/><rect x="237.6" y="107.0" width="1" height="1"/><rect x="239.1" y="99.5" width="1" height="1"/><rect x="240.7" y="92.0" width="1" height="1"/><rect x="242.2" y="84.5" width="1" height="1"/><rect x="243.8" y="77.0" width="1" height="1"/><rect x="245.4" y="69.5" width="1" height="1"/><rect x="246.9" y="62.0" width="1" height="1"/><rect x="248.5" y="54.5" width="1" height="1"/><rect x="286.5" y="110.5" width="1" height="1"/><rect x="290.7" y="101.2" width="1" height="1"/><rect x="294.8" y="91.8" width="1" height="1"/><rect x="299.0" y="82.5" width="1" height="1"/><rect x="303.2" y="73.2" width="1" height="1"/><rect x="307.3" y="63.8" width="1" height="1"/><rect x="311.5" y="54.5" width="1" height="1"/><rect x="328.0" y="115.5" width="1" height="1"/><rect x="329.6" y="107.9" width="1" height="1"/><rect x="331.1" y="100.2" width="1" height="1"/><rect x="332.7" y="92.6" width="1" height="1"/><rect x="334.2" y="85.0" width="1" height="1"/><rect x="335.8" y="77.4" width="1" height="1"/><rect x="337.4" y="69.8" width="1" height="1"/><rect x="338.9" y="62.1" width="1" height="1"/><rect x="340.5" y="54.5" width="1" height="1"/><rect x="376.5" y="118.5" width="1" height="1"/><rect x="372.3" y="107.8" width="1" height="1"/><rect x="368.2" y="97.2" width="1" height="1"/><rect x="364.0" y="86.5" width="1" height="1"/><rect x="359.8" y="75.8" width="1" height="1"/><rect x="355.7" y="65.2" width="1" height="1"/><rect x="351.5" y="54.5" width="1" height="1"/><rect x="419.0" y="123.5" width="1" height="1"/><rect x="418.8" y="114.9" width="1" height="1"/><rect x="418.6" y="106.2" width="1" height="1"/><rect x="418.4" y="97.6" width="1" height="1"/><rect x="418.2" y="89.0" width="1" height="1"/><rect x="418.1" y="80.4" width="1" height="1"/><rect x="417.9" y="71.8" width="1" height="1"/><rect x="417.7" y="63.1" width="1" height="1"/><rect x="417.5" y="54.5" width="1" height="1"/><rect x="151.5" y="150.0" width="1" height="1"/><rect x="160.5" y="150.4" width="1" height="1"/><rect x="169.5" y="150.8" width="1" height="1"/><rect x="178.5" y="151.1" width="1" height="1"/><rect x="187.5" y="151.5" width="1" height="1"/><rect x="463.5" y="157.3" width="1" height="1"/><rect x="472.5" y="157.6" width="1" height="1"/><rect x="481.5" y="157.8" width="1" height="1"/><rect x="149.5" y="197.5" width="1" height="1"/><rect x="159.5" y="197.8" width="1" height="1"/><rect x="169.5" y="198.0" width="1" height="1"/><rect x="179.5" y="198.2" width="1" height="1"/><rect x="189.5" y="198.5" width="1" height="1"/><rect x="461.5" y="204.0" width="1" height="1"/><rect x="473.0" y="204.2" width="1" height="1"/><rect x="484.5" y="204.5" width="1" height="1"/><rect x="149.5" y="242.5" width="1" height="1"/><rect x="158.5" y="242.7" width="1" height="1"/><rect x="167.5" y="242.9" width="1" height="1"/><rect x="176.5" y="243.1" width="1" height="1"/><rect x="185.5" y="243.3" width="1" height="1"/><rect x="465.5" y="249.8" width="1" height="1"/><rect x="475.0" y="250.0" width="1" height="1"/><rect x="484.5" y="250.2" width="1" height="1"/><rect x="149.5" y="287.5" width="1" height="1"/><rect x="158.5" y="288.1" width="1" height="1"/><rect x="167.5" y="288.8" width="1" height="1"/><rect x="176.5" y="289.4" width="1" height="1"/><rect x="185.5" y="290.0" width="1" height="1"/><rect x="463.5" y="295.9" width="1" height="1"/><rect x="473.5" y="296.1" width="1" height="1"/><rect x="483.5" y="296.3" width="1" height="1"/><rect x="149.5" y="334.5" width="1" height="1"/><rect x="160.5" y="334.8" width="1" height="1"/><rect x="171.5" y="335.0" width="1" height="1"/><rect x="182.5" y="335.2" width="1" height="1"/><rect x="193.5" y="335.5" width="1" height="1"/><rect x="464.5" y="341.3" width="1" height="1"/><rect x="474.0" y="341.5" width="1" height="1"/><rect x="483.5" y="341.7" width="1" height="1"/></g>
</svg>
</div>
<div class="a" style="left:545.4px;top:71.3px;width:466.1px;height:362.5px;background:#a0a0a0"></div>
<div class="a" style="left:547.5px;top:56.5px;width:1px;height:12px;background:repeating-linear-gradient(180deg,#c4c4c4 0 1px,transparent 1px 2px)"></div>
<div class="a" style="left:552px;top:56.8px;width:13px;height:11.4px;background:#a8cdea"></div><div class="t" style="left:552.9px;top:59.6px;font-size:3.9px;color:#111"><span style="font-size:6.2px">W</span>ord</div>
<svg class="a" style="left:568.6px;top:56.8px" width="12.6" height="11.4" viewBox="0 0 12.6 11.4"><rect width="12.6" height="11.4" fill="#0c5a96"/><rect x="0" y="0" width="7.8" height="7.2" fill="#a9cdea"/><path d="M4.4 0V7.2M0 3.9H7.8" stroke="#8ab6dc" stroke-width=".4"/><ellipse cx="9.7" cy="9.2" rx="2.8" ry="1.5" transform="rotate(35 9.7 9.2)" fill="#ee1c24"/></svg>
<svg class="a" style="left:584.9px;top:56.8px" width="12.7" height="11.4" viewBox="0 0 12.7 11.4"><rect width="12.7" height="11.4" fill="#b4da9e" stroke="#a0cc8a" stroke-width=".6"/><path d="M2.2 3.5h2.4M3.4 2.3v2.4M8.3 4.4h2.4M9.5 3.2v2.4M4.6 8.6h2.4M5.8 7.4v2.4" stroke="#4f86b8" stroke-width=".6"/></svg>
<svg class="a" style="left:601px;top:56.8px" width="13" height="11.4" viewBox="0 0 13 11.4"><rect width="13" height="11.4" fill="#b4da9e" stroke="#a0cc8a" stroke-width=".6"/><path d="M2.4 2.6L10 3.6L3.4 7.6L9.6 9.4" fill="none" stroke="#e8743c" stroke-width=".7"/><g fill="#4f86b8"><circle cx="2.4" cy="2.6" r=".7"/><circle cx="10" cy="3.6" r=".7"/><circle cx="3.4" cy="7.6" r=".7"/><circle cx="9.6" cy="9.4" r=".7"/></g></svg>
<svg class="a" style="left:617.4px;top:56.8px" width="12.8" height="11.4" viewBox="0 0 12.8 11.4"><rect width="12.8" height="11.4" fill="#b4da9e" stroke="#a0cc8a" stroke-width=".6"/><path d="M3.6 1.8L7.2 2.2L7 5L10.8 6L7.4 9.6L1.6 7.4Z" fill="#e0423c"/><g fill="#4f86b8"><circle cx="3.6" cy="1.8" r=".6"/><circle cx="10.8" cy="6" r=".6"/><circle cx="7.4" cy="9.6" r=".6"/><circle cx="1.6" cy="7.4" r=".6"/></g></svg>
<div class="a" style="left:8px;top:437px;width:1003.5px;height:10.8px;background:linear-gradient(180deg,#dcdcdc 0,#dcdcdc 85%,#ececec 100%)"></div>
<div class="t sf" style="left:9.3px;top:440.1px;font-size:7.2px;transform:scaleX(.845);color:#000;-webkit-text-stroke:.08px #000">Check Points</div>
<div class="a" style="left:8px;top:448px;width:283.2px;height:100.8px;background:#000"></div>
<div class="a" style="left:294.2px;top:448px;width:717.3px;height:100.8px;background:#fff;box-shadow:inset .6px -.6px 0 #e4eaf2"></div>
<div class="t" style="left:12px;top:551.3px;font-size:6.56px;color:#2a2a2a">Two Step Calibration finished</div>
<svg class="a" style="left:1001.6px;top:437.9px" width="7" height="7" viewBox="0 0 7 7"><rect x="1.2" y="2.4" width="3" height="3" fill="none" stroke="#222" stroke-width=".9"/><path d="M2.6 2.4V1.1H5.6V4H4.2" fill="none" stroke="#222" stroke-width=".9"/></svg>
<div class="a" style="left:489.0px;top:156.0px;width:511.70000000000005px;height:385.1px;border-radius:3.2px;box-shadow:1.2px 2px 4px 1.2px rgba(0,0,0,.58)"></div>
<svg class="a" style="left:0;top:0" width="1024" height="566" viewBox="0 0 1024 566"><defs><clipPath id="pc"><rect x="488.9" y="155.9" width="511.90000000000003" height="385.3" rx="3"/></clipPath><linearGradient id="ptg" gradientUnits="userSpaceOnUse" x1="489" y1="0" x2="1001" y2="0"><stop offset="0.000" stop-color="#646c70"/><stop offset="0.021" stop-color="#70787c"/><stop offset="0.061" stop-color="#8a9296"/><stop offset="0.096" stop-color="#a2aaae"/><stop offset="0.105" stop-color="#c8d8e4"/><stop offset="0.113" stop-color="#aecbe0"/><stop offset="0.139" stop-color="#9cbdd6"/><stop offset="0.217" stop-color="#8db3d0"/><stop offset="0.412" stop-color="#7aa2c2"/><stop offset="0.607" stop-color="#6d96b6"/><stop offset="0.803" stop-color="#7ea4c0"/><stop offset="1.000" stop-color="#a3c1d6"/></linearGradient><linearGradient id="ptv" x1="0" y1="0" x2="0" y2="1"><stop offset="0" stop-color="#fff" stop-opacity=".55"/><stop offset=".09" stop-color="#fff" stop-opacity=".12"/><stop offset=".5" stop-color="#fff" stop-opacity="0"/><stop offset="1" stop-color="#fff" stop-opacity=".14"/></linearGradient><linearGradient id="pls" x1="0" y1="0" x2="1" y2="0"><stop offset="0" stop-color="#dcecf8"/><stop offset="1" stop-color="#a6d0f2"/></linearGradient><linearGradient id="pld" x1="0" y1="0" x2="1" y2="0"><stop offset="0" stop-color="#6a747c"/><stop offset=".2" stop-color="#7c868e"/><stop offset=".42" stop-color="#1c262e"/><stop offset="1" stop-color="#0c141a"/></linearGradient><linearGradient id="plg" x1="0" y1="0" x2="0" y2="1"><stop offset="0" stop-color="#687076"/><stop offset=".6" stop-color="#6e767c"/><stop offset=".8" stop-color="#8e959a"/><stop offset=".96" stop-color="#c6cace"/><stop offset="1" stop-color="#d0d4d8"/></linearGradient><linearGradient id="plm" x1="0" y1="0" x2="0" y2="1"><stop offset="0" stop-color="#10181e"/><stop offset="1" stop-color="#10181e" stop-opacity="0"/></linearGradient><linearGradient id="prs" x1="0" y1="0" x2="0" y2="1"><stop offset="0" stop-color="#a9c3d9"/><stop offset=".262" stop-color="#b0c8dc"/><stop offset=".325" stop-color="#d8e3ec"/><stop offset=".341" stop-color="#e4ecf2"/><stop offset=".342" stop-color="#6c8eb0"/><stop offset="1" stop-color="#7092b1"/></linearGradient></defs><g clip-path="url(#pc)"><rect x="488.5" y="155.5" width="512.7" height="386.1" fill="#b0d8f8"/><rect x="488.5" y="155.5" width="512.7" height="16" fill="url(#ptg)"/><rect x="488.5" y="155.5" width="512.7" height="16" fill="url(#ptv)"/><rect x="488.5" y="171" width="4.2" height="370" fill="url(#pls)"/><rect x="488.5" y="261" width="4.2" height="171" fill="url(#pld)"/><rect x="488.5" y="171" width="4.2" height="90" fill="url(#plg)"/><rect x="489.7" y="431.9" width="3" height="3.6" fill="url(#plm)"/><rect x="996.8" y="171" width="4.4" height="263.5" fill="url(#prs)"/></g><rect x="488.9" y="155.9" width="511.90000000000003" height="385.3" rx="3" fill="none" stroke="#333c44" stroke-width=".8"/></svg>
<div class="a" style="left:493.3px;top:160px;width:7px;height:6px;background:#e8eef0;border:.5px solid #8899a0"></div><div class="a" style="left:494.3px;top:161.5px;width:3px;height:3.4px;background:#0a8a6a"></div>
<div class="t" style="left:503.7px;top:160.5px;font-size:6.72px;color:#0a0a0a;text-shadow:0 0 2px rgba(255,255,255,.9),0 0 4px rgba(255,255,255,.75),0 0 6px rgba(255,255,255,.5)">D:/PMMS_GUI/DATA/UAV/20120222_600/UAV_cal.txt</div>
<svg class="a" style="left:940px;top:154px" width="62" height="14" viewBox="940 154 62 14"><defs><linearGradient id="bg1" x1="0" y1="0" x2="0" y2="1"><stop offset="0" stop-color="#c6d6e2"/><stop offset=".48" stop-color="#aec4d6"/><stop offset=".52" stop-color="#90aac0"/><stop offset="1" stop-color="#a2bace"/></linearGradient><linearGradient id="bg2" x1="0" y1="0" x2="0" y2="1"><stop offset="0" stop-color="#eeb4a8"/><stop offset=".45" stop-color="#e08c7c"/><stop offset=".52" stop-color="#d23c1e"/><stop offset=".85" stop-color="#e0562e"/><stop offset="1" stop-color="#e8825c"/></linearGradient><clipPath id="bc"><path d="M943.4 155.6H997.2V163.4Q997.2 165.8 994.8 165.8H945.8Q943.4 165.8 943.4 163.4Z"/></clipPath></defs><g clip-path="url(#bc)"><rect x="943.4" y="155.6" width="28.4" height="10.4" fill="url(#bg1)"/><rect x="971.8" y="155.6" width="25.6" height="10.4" fill="url(#bg2)"/><path d="M957.4 155.6V166M971.8 155.6V166" stroke="#4c5e70" stroke-width=".7"/><path d="M958 155.6V166M944.1 155.6V166M972.5 155.6V166" stroke="#fff" stroke-opacity=".35" stroke-width=".5"/></g><path d="M943.4 156.2V163.4Q943.4 165.8 945.8 165.8H994.8Q997.2 165.8 997.2 163.4V156.2" fill="none" stroke="#44566a" stroke-width=".7"/><rect x="947.4" y="161" width="7.3" height="2.4" rx=".9" fill="#fff" stroke="#55657a" stroke-width=".6"/><rect x="962.1" y="158.4" width="6.5" height="4.8" rx=".9" fill="#5c7086" stroke="#55657a" stroke-width=".5"/><rect x="962.8" y="159.1" width="5.1" height="3.4" rx=".5" fill="none" stroke="#fff" stroke-width=".95"/><path d="M982.6 158.3L987.6 162.9M987.6 158.3L982.6 162.9" stroke="#5a2a28" stroke-width="2.3" stroke-linecap="round" stroke-opacity=".75"/><path d="M982.6 158.3L987.6 162.9M987.6 158.3L982.6 162.9" stroke="#fff" stroke-width="1.35"/></svg>
<div class="a" style="left:492.3px;top:171.3px;width:504.7px;height:207.7px;background:#000"></div>
<svg class="a" style="left:0;top:0" width="1024" height="566" viewBox="0 0 1024 566">
<g fill="#dcd616"><rect x="660.3" y="215.3" width="2.4" height="2.4"/><rect x="665.8" y="215.4" width="2.4" height="2.4"/><rect x="671.3" y="215.5" width="2.4" height="2.4"/><rect x="676.8" y="215.6" width="2.4" height="2.4"/><rect x="682.3" y="215.7" width="2.4" height="2.4"/><rect x="687.8" y="215.8" width="2.4" height="2.4"/><rect x="693.3" y="215.8" width="2.4" height="2.4"/><rect x="698.8" y="215.9" width="2.4" height="2.4"/><rect x="704.3" y="216.0" width="2.4" height="2.4"/><rect x="709.8" y="216.1" width="2.4" height="2.4"/><rect x="715.3" y="216.2" width="2.4" height="2.4"/><rect x="720.8" y="216.3" width="2.4" height="2.4"/><rect x="726.3" y="216.4" width="2.4" height="2.4"/><rect x="731.8" y="216.5" width="2.4" height="2.4"/><rect x="737.3" y="216.6" width="2.4" height="2.4"/><rect x="742.8" y="216.7" width="2.4" height="2.4"/><rect x="748.3" y="216.7" width="2.4" height="2.4"/><rect x="753.8" y="216.8" width="2.4" height="2.4"/><rect x="759.3" y="216.9" width="2.4" height="2.4"/><rect x="764.8" y="217.0" width="2.4" height="2.4"/><rect x="770.3" y="217.1" width="2.4" height="2.4"/><rect x="775.8" y="217.2" width="2.4" height="2.4"/><rect x="781.3" y="217.3" width="2.4" height="2.4"/><rect x="786.8" y="217.4" width="2.4" height="2.4"/><rect x="792.3" y="217.5" width="2.4" height="2.4"/><rect x="797.8" y="217.6" width="2.4" height="2.4"/><rect x="803.3" y="217.6" width="2.4" height="2.4"/><rect x="808.8" y="217.7" width="2.4" height="2.4"/><rect x="814.3" y="217.8" width="2.4" height="2.4"/><rect x="819.8" y="217.9" width="2.4" height="2.4"/><rect x="825.3" y="218.0" width="2.4" height="2.4"/><rect x="661.6" y="245.1" width="2.4" height="2.4"/><rect x="667.5" y="245.2" width="2.4" height="2.4"/><rect x="673.3" y="245.3" width="2.4" height="2.4"/><rect x="679.2" y="245.4" width="2.4" height="2.4"/><rect x="685.1" y="245.6" width="2.4" height="2.4"/><rect x="691.0" y="245.7" width="2.4" height="2.4"/><rect x="696.8" y="245.8" width="2.4" height="2.4"/><rect x="702.7" y="245.9" width="2.4" height="2.4"/><rect x="708.6" y="246.0" width="2.4" height="2.4"/><rect x="714.4" y="246.1" width="2.4" height="2.4"/><rect x="720.3" y="246.2" width="2.4" height="2.4"/><rect x="726.2" y="246.4" width="2.4" height="2.4"/><rect x="732.1" y="246.5" width="2.4" height="2.4"/><rect x="737.9" y="246.6" width="2.4" height="2.4"/><rect x="743.8" y="246.7" width="2.4" height="2.4"/><rect x="749.7" y="246.8" width="2.4" height="2.4"/><rect x="755.5" y="246.9" width="2.4" height="2.4"/><rect x="761.4" y="247.0" width="2.4" height="2.4"/><rect x="767.3" y="247.2" width="2.4" height="2.4"/><rect x="773.2" y="247.3" width="2.4" height="2.4"/><rect x="779.0" y="247.4" width="2.4" height="2.4"/><rect x="784.9" y="247.5" width="2.4" height="2.4"/><rect x="790.8" y="247.6" width="2.4" height="2.4"/><rect x="796.6" y="247.7" width="2.4" height="2.4"/><rect x="802.5" y="247.8" width="2.4" height="2.4"/><rect x="808.4" y="248.0" width="2.4" height="2.4"/><rect x="814.3" y="248.1" width="2.4" height="2.4"/><rect x="820.1" y="248.2" width="2.4" height="2.4"/><rect x="826.0" y="248.3" width="2.4" height="2.4"/><rect x="658.3" y="274.1" width="2.4" height="2.4"/><rect x="664.0" y="274.2" width="2.4" height="2.4"/><rect x="669.6" y="274.3" width="2.4" height="2.4"/><rect x="675.3" y="274.4" width="2.4" height="2.4"/><rect x="681.0" y="274.5" width="2.4" height="2.4"/><rect x="686.7" y="274.6" width="2.4" height="2.4"/><rect x="692.3" y="274.7" width="2.4" height="2.4"/><rect x="698.0" y="274.8" width="2.4" height="2.4"/><rect x="703.7" y="274.9" width="2.4" height="2.4"/><rect x="709.4" y="275.0" width="2.4" height="2.4"/><rect x="715.0" y="275.1" width="2.4" height="2.4"/><rect x="720.7" y="275.2" width="2.4" height="2.4"/><rect x="726.4" y="275.3" width="2.4" height="2.4"/><rect x="732.1" y="275.4" width="2.4" height="2.4"/><rect x="737.7" y="275.5" width="2.4" height="2.4"/><rect x="743.4" y="275.7" width="2.4" height="2.4"/><rect x="749.1" y="275.8" width="2.4" height="2.4"/><rect x="754.7" y="275.9" width="2.4" height="2.4"/><rect x="760.4" y="276.0" width="2.4" height="2.4"/><rect x="766.1" y="276.1" width="2.4" height="2.4"/><rect x="771.8" y="276.2" width="2.4" height="2.4"/><rect x="777.4" y="276.3" width="2.4" height="2.4"/><rect x="783.1" y="276.4" width="2.4" height="2.4"/><rect x="788.8" y="276.5" width="2.4" height="2.4"/><rect x="794.5" y="276.6" width="2.4" height="2.4"/><rect x="800.1" y="276.7" width="2.4" height="2.4"/><rect x="805.8" y="276.8" width="2.4" height="2.4"/><rect x="811.5" y="276.9" width="2.4" height="2.4"/><rect x="817.2" y="277.0" width="2.4" height="2.4"/><rect x="822.8" y="277.1" width="2.4" height="2.4"/><rect x="828.5" y="277.2" width="2.4" height="2.4"/><rect x="658.9" y="304.4" width="2.4" height="2.4"/><rect x="664.7" y="304.5" width="2.4" height="2.4"/><rect x="670.5" y="304.6" width="2.4" height="2.4"/><rect x="676.3" y="304.7" width="2.4" height="2.4"/><rect x="682.1" y="304.8" width="2.4" height="2.4"/><rect x="687.9" y="304.9" width="2.4" height="2.4"/><rect x="693.7" y="305.0" width="2.4" height="2.4"/><rect x="699.5" y="305.1" width="2.4" height="2.4"/><rect x="705.2" y="305.2" width="2.4" height="2.4"/><rect x="711.0" y="305.3" width="2.4" height="2.4"/><rect x="716.8" y="305.4" width="2.4" height="2.4"/><rect x="722.6" y="305.5" width="2.4" height="2.4"/><rect x="728.4" y="305.6" width="2.4" height="2.4"/><rect x="734.2" y="305.7" width="2.4" height="2.4"/><rect x="740.0" y="305.8" width="2.4" height="2.4"/><rect x="745.8" y="305.9" width="2.4" height="2.4"/><rect x="751.6" y="306.0" width="2.4" height="2.4"/><rect x="757.4" y="306.1" width="2.4" height="2.4"/><rect x="763.2" y="306.2" width="2.4" height="2.4"/><rect x="769.0" y="306.3" width="2.4" height="2.4"/><rect x="774.8" y="306.4" width="2.4" height="2.4"/><rect x="780.6" y="306.5" width="2.4" height="2.4"/><rect x="786.3" y="306.6" width="2.4" height="2.4"/><rect x="792.1" y="306.7" width="2.4" height="2.4"/><rect x="797.9" y="306.8" width="2.4" height="2.4"/><rect x="803.7" y="306.9" width="2.4" height="2.4"/><rect x="809.5" y="307.0" width="2.4" height="2.4"/><rect x="815.3" y="307.1" width="2.4" height="2.4"/><rect x="821.1" y="307.2" width="2.4" height="2.4"/><rect x="826.9" y="307.3" width="2.4" height="2.4"/><rect x="663.7" y="333.9" width="2.4" height="2.4"/><rect x="669.4" y="334.0" width="2.4" height="2.4"/><rect x="675.0" y="334.1" width="2.4" height="2.4"/><rect x="680.7" y="334.1" width="2.4" height="2.4"/><rect x="686.4" y="334.2" width="2.4" height="2.4"/><rect x="692.0" y="334.3" width="2.4" height="2.4"/><rect x="697.7" y="334.4" width="2.4" height="2.4"/><rect x="703.4" y="334.5" width="2.4" height="2.4"/><rect x="709.0" y="334.6" width="2.4" height="2.4"/><rect x="714.7" y="334.6" width="2.4" height="2.4"/><rect x="720.4" y="334.7" width="2.4" height="2.4"/><rect x="726.0" y="334.8" width="2.4" height="2.4"/><rect x="731.7" y="334.9" width="2.4" height="2.4"/><rect x="737.4" y="335.0" width="2.4" height="2.4"/><rect x="743.0" y="335.1" width="2.4" height="2.4"/><rect x="748.7" y="335.1" width="2.4" height="2.4"/><rect x="754.3" y="335.2" width="2.4" height="2.4"/><rect x="760.0" y="335.3" width="2.4" height="2.4"/><rect x="765.7" y="335.4" width="2.4" height="2.4"/><rect x="771.3" y="335.5" width="2.4" height="2.4"/><rect x="777.0" y="335.6" width="2.4" height="2.4"/><rect x="782.7" y="335.6" width="2.4" height="2.4"/><rect x="788.3" y="335.7" width="2.4" height="2.4"/><rect x="794.0" y="335.8" width="2.4" height="2.4"/><rect x="799.7" y="335.9" width="2.4" height="2.4"/><rect x="805.3" y="336.0" width="2.4" height="2.4"/><rect x="811.0" y="336.1" width="2.4" height="2.4"/><rect x="816.7" y="336.1" width="2.4" height="2.4"/><rect x="822.3" y="336.2" width="2.4" height="2.4"/><rect x="828.0" y="336.3" width="2.4" height="2.4"/><rect x="685.3" y="195.1" width="2.4" height="2.4"/><rect x="685.3" y="199.9" width="2.4" height="2.4"/><rect x="685.3" y="204.6" width="2.4" height="2.4"/><rect x="685.3" y="209.4" width="2.4" height="2.4"/><rect x="685.3" y="214.2" width="2.4" height="2.4"/><rect x="685.3" y="218.9" width="2.4" height="2.4"/><rect x="685.3" y="223.7" width="2.4" height="2.4"/><rect x="685.3" y="228.4" width="2.4" height="2.4"/><rect x="685.3" y="233.2" width="2.4" height="2.4"/><rect x="685.3" y="238.0" width="2.4" height="2.4"/><rect x="685.3" y="242.7" width="2.4" height="2.4"/><rect x="685.3" y="247.5" width="2.4" height="2.4"/><rect x="685.3" y="252.3" width="2.4" height="2.4"/><rect x="685.3" y="257.0" width="2.4" height="2.4"/><rect x="685.3" y="261.8" width="2.4" height="2.4"/><rect x="685.3" y="266.6" width="2.4" height="2.4"/><rect x="685.3" y="271.3" width="2.4" height="2.4"/><rect x="685.2" y="276.1" width="2.4" height="2.4"/><rect x="685.2" y="280.8" width="2.4" height="2.4"/><rect x="685.2" y="285.6" width="2.4" height="2.4"/><rect x="685.2" y="290.4" width="2.4" height="2.4"/><rect x="685.2" y="295.1" width="2.4" height="2.4"/><rect x="685.2" y="299.9" width="2.4" height="2.4"/><rect x="685.2" y="304.7" width="2.4" height="2.4"/><rect x="685.2" y="309.4" width="2.4" height="2.4"/><rect x="685.2" y="314.2" width="2.4" height="2.4"/><rect x="685.2" y="319.0" width="2.4" height="2.4"/><rect x="685.2" y="323.7" width="2.4" height="2.4"/><rect x="685.2" y="328.5" width="2.4" height="2.4"/><rect x="685.2" y="333.2" width="2.4" height="2.4"/><rect x="685.2" y="338.0" width="2.4" height="2.4"/><rect x="685.2" y="342.8" width="2.4" height="2.4"/><rect x="685.2" y="347.5" width="2.4" height="2.4"/><rect x="685.2" y="352.3" width="2.4" height="2.4"/><rect x="717.0" y="194.3" width="2.4" height="2.4"/><rect x="716.7" y="201.1" width="2.4" height="2.4"/><rect x="716.5" y="207.8" width="2.4" height="2.4"/><rect x="716.2" y="214.6" width="2.4" height="2.4"/><rect x="716.0" y="221.4" width="2.4" height="2.4"/><rect x="715.8" y="228.2" width="2.4" height="2.4"/><rect x="715.6" y="234.9" width="2.4" height="2.4"/><rect x="715.4" y="241.7" width="2.4" height="2.4"/><rect x="715.3" y="248.5" width="2.4" height="2.4"/><rect x="715.1" y="255.3" width="2.4" height="2.4"/><rect x="715.0" y="262.0" width="2.4" height="2.4"/><rect x="714.9" y="268.8" width="2.4" height="2.4"/><rect x="714.8" y="275.6" width="2.4" height="2.4"/><rect x="714.7" y="282.4" width="2.4" height="2.4"/><rect x="714.7" y="289.1" width="2.4" height="2.4"/><rect x="714.7" y="295.9" width="2.4" height="2.4"/><rect x="714.7" y="302.7" width="2.4" height="2.4"/><rect x="714.7" y="309.5" width="2.4" height="2.4"/><rect x="714.7" y="316.2" width="2.4" height="2.4"/><rect x="714.7" y="323.0" width="2.4" height="2.4"/><rect x="714.8" y="329.8" width="2.4" height="2.4"/><rect x="714.9" y="336.6" width="2.4" height="2.4"/><rect x="715.0" y="343.3" width="2.4" height="2.4"/><rect x="715.1" y="350.1" width="2.4" height="2.4"/><rect x="744.2" y="195.7" width="2.4" height="2.4"/><rect x="744.2" y="200.6" width="2.4" height="2.4"/><rect x="744.2" y="205.6" width="2.4" height="2.4"/><rect x="744.2" y="210.5" width="2.4" height="2.4"/><rect x="744.2" y="215.5" width="2.4" height="2.4"/><rect x="744.2" y="220.4" width="2.4" height="2.4"/><rect x="744.2" y="225.3" width="2.4" height="2.4"/><rect x="744.2" y="230.3" width="2.4" height="2.4"/><rect x="744.2" y="235.2" width="2.4" height="2.4"/><rect x="744.3" y="240.2" width="2.4" height="2.4"/><rect x="744.3" y="245.1" width="2.4" height="2.4"/><rect x="744.3" y="250.0" width="2.4" height="2.4"/><rect x="744.3" y="255.0" width="2.4" height="2.4"/><rect x="744.3" y="259.9" width="2.4" height="2.4"/><rect x="744.3" y="264.9" width="2.4" height="2.4"/><rect x="744.3" y="269.8" width="2.4" height="2.4"/><rect x="744.3" y="274.8" width="2.4" height="2.4"/><rect x="744.3" y="279.7" width="2.4" height="2.4"/><rect x="744.3" y="284.6" width="2.4" height="2.4"/><rect x="744.3" y="289.6" width="2.4" height="2.4"/><rect x="744.3" y="294.5" width="2.4" height="2.4"/><rect x="744.3" y="299.5" width="2.4" height="2.4"/><rect x="744.3" y="304.4" width="2.4" height="2.4"/><rect x="744.3" y="309.3" width="2.4" height="2.4"/><rect x="744.3" y="314.3" width="2.4" height="2.4"/><rect x="744.4" y="319.2" width="2.4" height="2.4"/><rect x="744.4" y="324.2" width="2.4" height="2.4"/><rect x="744.4" y="329.1" width="2.4" height="2.4"/><rect x="744.4" y="334.0" width="2.4" height="2.4"/><rect x="744.4" y="339.0" width="2.4" height="2.4"/><rect x="744.4" y="343.9" width="2.4" height="2.4"/><rect x="744.4" y="348.9" width="2.4" height="2.4"/><rect x="744.4" y="353.8" width="2.4" height="2.4"/><rect x="775.8" y="196.9" width="2.4" height="2.4"/><rect x="775.6" y="203.5" width="2.4" height="2.4"/><rect x="775.4" y="210.1" width="2.4" height="2.4"/><rect x="775.3" y="216.6" width="2.4" height="2.4"/><rect x="775.1" y="223.2" width="2.4" height="2.4"/><rect x="775.0" y="229.8" width="2.4" height="2.4"/><rect x="774.8" y="236.4" width="2.4" height="2.4"/><rect x="774.7" y="243.0" width="2.4" height="2.4"/><rect x="774.6" y="249.6" width="2.4" height="2.4"/><rect x="774.4" y="256.1" width="2.4" height="2.4"/><rect x="774.3" y="262.7" width="2.4" height="2.4"/><rect x="774.2" y="269.3" width="2.4" height="2.4"/><rect x="774.2" y="275.9" width="2.4" height="2.4"/><rect x="774.1" y="282.5" width="2.4" height="2.4"/><rect x="774.0" y="289.1" width="2.4" height="2.4"/><rect x="774.0" y="295.6" width="2.4" height="2.4"/><rect x="773.9" y="302.2" width="2.4" height="2.4"/><rect x="773.9" y="308.8" width="2.4" height="2.4"/><rect x="773.8" y="315.4" width="2.4" height="2.4"/><rect x="773.8" y="322.0" width="2.4" height="2.4"/><rect x="773.8" y="328.6" width="2.4" height="2.4"/><rect x="773.8" y="335.1" width="2.4" height="2.4"/><rect x="773.8" y="341.7" width="2.4" height="2.4"/><rect x="773.8" y="348.3" width="2.4" height="2.4"/><rect x="803.8" y="200.3" width="2.4" height="2.4"/><rect x="803.8" y="205.1" width="2.4" height="2.4"/><rect x="803.8" y="209.8" width="2.4" height="2.4"/><rect x="803.8" y="214.6" width="2.4" height="2.4"/><rect x="803.8" y="219.4" width="2.4" height="2.4"/><rect x="803.8" y="224.2" width="2.4" height="2.4"/><rect x="803.8" y="228.9" width="2.4" height="2.4"/><rect x="803.8" y="233.7" width="2.4" height="2.4"/><rect x="803.8" y="238.5" width="2.4" height="2.4"/><rect x="803.8" y="243.2" width="2.4" height="2.4"/><rect x="803.8" y="248.0" width="2.4" height="2.4"/><rect x="803.8" y="252.8" width="2.4" height="2.4"/><rect x="803.8" y="257.6" width="2.4" height="2.4"/><rect x="803.8" y="262.3" width="2.4" height="2.4"/><rect x="803.8" y="267.1" width="2.4" height="2.4"/><rect x="803.8" y="271.9" width="2.4" height="2.4"/><rect x="803.8" y="276.7" width="2.4" height="2.4"/><rect x="803.8" y="281.4" width="2.4" height="2.4"/><rect x="803.8" y="286.2" width="2.4" height="2.4"/><rect x="803.8" y="291.0" width="2.4" height="2.4"/><rect x="803.8" y="295.7" width="2.4" height="2.4"/><rect x="803.8" y="300.5" width="2.4" height="2.4"/><rect x="803.8" y="305.3" width="2.4" height="2.4"/><rect x="803.8" y="310.1" width="2.4" height="2.4"/><rect x="803.8" y="314.8" width="2.4" height="2.4"/><rect x="803.8" y="319.6" width="2.4" height="2.4"/><rect x="803.8" y="324.4" width="2.4" height="2.4"/><rect x="803.8" y="329.1" width="2.4" height="2.4"/><rect x="803.8" y="333.9" width="2.4" height="2.4"/><rect x="803.8" y="338.7" width="2.4" height="2.4"/><rect x="803.8" y="343.5" width="2.4" height="2.4"/><rect x="803.8" y="348.2" width="2.4" height="2.4"/><rect x="803.8" y="353.0" width="2.4" height="2.4"/></g>
<g stroke="#0d960d" stroke-width="1" stroke-linecap="butt" fill="none"><path d="M661.5 216.5L648.1 210.1"/><path d="M667.0 216.6L654.2 210.3"/><path d="M672.5 216.7L660.3 210.6"/><path d="M678.0 216.8L666.5 210.8"/><path d="M683.5 216.9L672.6 211.0"/><path d="M689.0 216.9L678.7 211.3"/><path d="M694.5 217.0L684.8 211.5"/><path d="M700.0 217.1L690.9 211.7"/><path d="M705.5 217.2L696.6 211.7"/><path d="M711.0 217.3L702.2 211.8"/><path d="M716.5 217.4L707.9 211.8"/><path d="M722.0 217.5L713.5 211.8"/><path d="M727.5 217.6L719.2 211.8"/><path d="M733.0 217.7L724.8 211.8"/><path d="M738.5 217.8L730.5 211.9"/><path d="M744.0 217.8L736.5 211.7"/><path d="M749.5 217.9L742.6 211.5"/><path d="M755.0 218.0L748.7 211.4"/><path d="M760.5 218.1L754.5 211.3"/><path d="M766.0 218.2L760.2 211.3"/><path d="M771.5 218.3L765.9 211.2"/><path d="M777.0 218.4L771.6 211.2"/><path d="M782.5 218.5L777.3 211.1"/><path d="M788.0 218.6L783.0 211.1"/><path d="M793.5 218.7L788.9 211.0"/><path d="M799.0 218.8L794.8 210.9"/><path d="M804.5 218.8L800.7 210.8"/><path d="M810.0 218.9L806.6 210.7"/><path d="M815.5 219.0L812.5 210.6"/><path d="M821.0 219.1L819.2 211.4"/><path d="M826.5 219.2L826.0 212.2"/><path d="M662.8 246.3L658.3 240.9"/><path d="M668.7 246.4L664.7 241.0"/><path d="M674.5 246.5L671.1 241.1"/><path d="M680.4 246.6L677.5 241.2"/><path d="M686.3 246.8L683.9 241.4"/><path d="M692.2 246.9L690.3 241.5"/><path d="M698.0 247.0L696.6 241.6"/><path d="M703.9 247.1L702.9 241.7"/><path d="M709.8 247.2L709.5 241.7"/><path d="M715.6 247.3L716.0 241.5"/><path d="M721.5 247.4L722.4 241.3"/><path d="M727.4 247.6L728.6 241.4"/><path d="M733.3 247.7L734.8 241.7"/><path d="M739.1 247.8L741.0 241.7"/><path d="M745.0 247.9L747.1 241.8"/><path d="M750.9 248.0L753.4 241.8"/><path d="M756.7 248.1L759.6 241.7"/><path d="M762.6 248.2L765.9 241.7"/><path d="M768.5 248.4L772.1 241.7"/><path d="M774.4 248.5L778.4 241.6"/><path d="M780.2 248.6L784.7 241.6"/><path d="M786.1 248.7L791.0 241.6"/><path d="M792.0 248.8L797.4 241.5"/><path d="M797.8 248.9L803.8 241.4"/><path d="M803.7 249.0L809.9 241.4"/><path d="M809.6 249.2L815.9 241.3"/><path d="M815.5 249.3L821.9 241.2"/><path d="M821.3 249.4L828.0 241.2"/><path d="M827.2 249.5L834.0 241.1"/><path d="M659.5 275.3L646.5 275.0"/><path d="M665.2 275.4L652.4 275.1"/><path d="M670.8 275.5L658.3 275.1"/><path d="M676.5 275.6L664.2 275.2"/><path d="M682.2 275.7L670.1 275.3"/><path d="M687.9 275.8L676.0 275.4"/><path d="M693.5 275.9L681.9 275.4"/><path d="M699.2 276.0L687.8 275.5"/><path d="M704.9 276.1L693.7 275.6"/><path d="M710.6 276.2L699.6 275.6"/><path d="M716.2 276.3L705.8 275.7"/><path d="M721.9 276.4L712.0 275.7"/><path d="M727.6 276.5L718.2 275.7"/><path d="M733.3 276.6L724.4 275.7"/><path d="M738.9 276.7L730.6 275.7"/><path d="M744.6 276.9L736.8 275.8"/><path d="M750.3 277.0L743.0 275.8"/><path d="M755.9 277.1L749.2 275.8"/><path d="M761.6 277.2L755.5 275.7"/><path d="M767.3 277.3L761.7 275.6"/><path d="M773.0 277.4L767.9 275.5"/><path d="M778.6 277.5L774.1 275.5"/><path d="M784.3 277.6L780.2 275.4"/><path d="M790.0 277.7L786.2 275.3"/><path d="M795.7 277.8L792.3 275.5"/><path d="M801.3 277.9L798.4 275.8"/><path d="M807.0 278.0L804.6 276.0"/><path d="M812.7 278.1L810.7 276.3"/><path d="M818.4 278.2L816.7 276.4"/><path d="M824.0 278.3L822.7 276.5"/><path d="M829.7 278.4L828.7 276.6"/><path d="M660.1 305.6L657.1 305.6"/><path d="M665.9 305.7L663.1 305.7"/><path d="M671.7 305.8L669.0 305.8"/><path d="M677.5 305.9L675.0 305.9"/><path d="M683.3 306.0L681.0 306.0"/><path d="M689.1 306.1L686.9 306.1"/><path d="M694.9 306.2L692.9 306.2"/><path d="M700.7 306.3L698.9 306.3"/><path d="M706.4 306.4L704.8 306.4"/><path d="M712.2 306.5L710.9 306.5"/><path d="M718.0 306.6L717.1 306.4"/><path d="M723.8 306.7L723.3 306.4"/><path d="M729.6 306.8L729.5 306.3"/><path d="M735.4 306.9L735.8 306.3"/><path d="M741.2 307.0L742.0 306.3"/><path d="M747.0 307.1L748.3 306.2"/><path d="M752.8 307.2L754.7 306.1"/><path d="M758.6 307.3L761.0 305.9"/><path d="M764.4 307.4L767.4 305.8"/><path d="M770.2 307.5L773.5 305.8"/><path d="M776.0 307.6L779.6 305.9"/><path d="M781.8 307.7L785.7 305.9"/><path d="M787.5 307.8L791.8 305.9"/><path d="M793.3 307.9L797.9 306.0"/><path d="M799.1 308.0L804.1 306.0"/><path d="M804.9 308.1L810.6 305.9"/><path d="M810.7 308.2L817.1 305.8"/><path d="M816.5 308.3L823.7 305.7"/><path d="M822.3 308.4L830.2 305.6"/><path d="M828.1 308.5L836.7 305.5"/><path d="M664.9 335.1L654.5 338.9"/><path d="M670.6 335.2L660.4 338.9"/><path d="M676.2 335.3L666.4 338.9"/><path d="M681.9 335.3L672.3 338.9"/><path d="M687.6 335.4L678.3 338.9"/><path d="M693.2 335.5L684.2 338.9"/><path d="M698.9 335.6L690.1 338.8"/><path d="M704.6 335.7L696.1 338.8"/><path d="M710.2 335.8L702.0 338.8"/><path d="M715.9 335.8L708.0 338.8"/><path d="M721.6 335.9L714.0 338.8"/><path d="M727.2 336.0L720.0 338.7"/><path d="M732.9 336.1L726.0 338.7"/><path d="M738.6 336.2L732.0 338.7"/><path d="M744.2 336.3L738.0 338.6"/><path d="M749.9 336.3L744.1 338.6"/><path d="M755.5 336.4L750.1 338.6"/><path d="M761.2 336.5L756.1 338.6"/><path d="M766.9 336.6L762.2 338.5"/><path d="M772.5 336.7L768.4 338.3"/><path d="M778.2 336.8L774.6 338.2"/><path d="M783.9 336.8L780.7 338.1"/><path d="M789.5 336.9L786.9 338.0"/><path d="M795.2 337.0L793.1 337.8"/><path d="M800.9 337.1L799.1 337.8"/><path d="M806.5 337.2L805.2 337.7"/><path d="M812.2 337.3L811.2 337.7"/><path d="M817.9 337.3L817.2 337.6"/><path d="M823.5 337.4L823.2 337.6"/><path d="M829.2 337.5L829.2 337.5"/><path d="M686.5 196.3L680.0 191.8"/><path d="M686.5 201.1L680.1 196.8"/><path d="M686.5 205.8L680.1 201.9"/><path d="M686.5 210.6L680.2 206.9"/><path d="M686.5 215.4L680.3 212.0"/><path d="M686.5 220.1L680.3 217.0"/><path d="M686.5 224.9L680.4 222.1"/><path d="M686.5 229.6L680.5 227.1"/><path d="M686.5 234.4L680.7 232.4"/><path d="M686.5 239.2L680.9 237.6"/><path d="M686.5 243.9L681.1 242.9"/><path d="M686.5 248.7L681.3 248.2"/><path d="M686.5 253.5L681.4 253.4"/><path d="M686.5 258.2L681.5 258.5"/><path d="M686.5 263.0L681.5 263.5"/><path d="M686.5 267.8L681.5 268.5"/><path d="M686.5 272.5L681.6 273.6"/><path d="M686.4 277.3L681.7 278.8"/><path d="M686.4 282.0L681.8 283.9"/><path d="M686.4 286.8L681.9 289.1"/><path d="M686.4 291.6L682.0 294.3"/><path d="M686.4 296.3L682.1 299.5"/><path d="M686.4 301.1L682.2 304.5"/><path d="M686.4 305.9L682.3 309.6"/><path d="M686.4 310.6L682.4 314.6"/><path d="M686.4 315.4L682.4 319.8"/><path d="M686.4 320.2L682.4 325.0"/><path d="M686.4 324.9L682.4 330.3"/><path d="M686.4 329.7L682.5 335.5"/><path d="M686.4 334.4L682.6 340.7"/><path d="M686.4 339.2L682.7 345.9"/><path d="M686.4 344.0L682.8 351.1"/><path d="M686.4 348.7L682.9 356.3"/><path d="M686.4 353.5L683.0 361.5"/><path d="M718.2 195.5L713.0 180.2"/><path d="M717.9 202.3L712.4 187.8"/><path d="M717.7 209.0L711.9 195.4"/><path d="M717.4 215.8L711.4 202.9"/><path d="M717.2 222.6L711.2 210.3"/><path d="M717.0 229.4L711.0 217.6"/><path d="M716.8 236.1L710.8 224.9"/><path d="M716.6 242.9L710.5 232.1"/><path d="M716.5 249.7L709.6 239.2"/><path d="M716.3 256.5L710.1 246.5"/><path d="M716.2 263.2L710.4 253.9"/><path d="M716.1 270.0L710.4 261.1"/><path d="M716.0 276.8L710.4 268.4"/><path d="M715.9 283.6L710.5 275.6"/><path d="M715.9 290.3L710.4 282.8"/><path d="M715.9 297.1L709.9 289.6"/><path d="M715.9 303.9L709.6 296.5"/><path d="M715.9 310.7L710.8 304.3"/><path d="M715.9 317.4L711.9 312.0"/><path d="M715.9 324.2L712.1 319.5"/><path d="M716.0 331.0L712.2 327.0"/><path d="M716.1 337.8L711.9 333.9"/><path d="M716.2 344.5L711.7 340.7"/><path d="M716.3 351.3L713.1 350.5"/><path d="M745.4 196.9L744.9 192.1"/><path d="M745.4 201.8L745.0 197.6"/><path d="M745.4 206.8L745.0 203.1"/><path d="M745.4 211.7L745.1 208.7"/><path d="M745.4 216.7L745.2 214.2"/><path d="M745.4 221.6L745.2 219.6"/><path d="M745.4 226.5L745.3 224.8"/><path d="M745.4 231.5L745.3 229.9"/><path d="M745.5 236.4L745.3 235.0"/><path d="M745.5 241.4L745.3 240.1"/><path d="M745.5 246.3L745.4 245.2"/><path d="M745.5 251.2L745.4 250.4"/><path d="M745.5 256.2L745.4 255.5"/><path d="M745.5 261.1L745.4 260.6"/><path d="M745.5 266.1L745.5 265.7"/><path d="M745.5 271.0L745.5 270.8"/><path d="M745.5 275.9L745.5 275.9"/><path d="M745.5 280.9L745.6 281.1"/><path d="M745.5 285.8L745.6 286.2"/><path d="M745.5 290.8L745.7 291.4"/><path d="M745.5 295.7L745.7 296.5"/><path d="M745.5 300.7L745.8 301.7"/><path d="M745.5 305.6L745.9 306.8"/><path d="M745.5 310.5L745.9 312.0"/><path d="M745.5 315.5L746.0 317.1"/><path d="M745.6 320.4L746.0 322.3"/><path d="M745.6 325.4L746.1 327.5"/><path d="M745.6 330.3L746.2 332.9"/><path d="M745.6 335.2L746.3 338.3"/><path d="M745.6 340.2L746.3 343.7"/><path d="M745.6 345.1L746.4 349.0"/><path d="M745.6 350.1L746.5 354.4"/><path d="M745.6 355.0L746.6 359.8"/><path d="M777.0 198.1L774.3 182.6"/><path d="M776.8 204.7L774.2 190.2"/><path d="M776.6 211.3L774.1 197.8"/><path d="M776.5 217.8L774.0 205.4"/><path d="M776.3 224.4L774.0 212.6"/><path d="M776.2 231.0L773.9 219.5"/><path d="M776.0 237.6L773.8 226.3"/><path d="M775.9 244.2L773.8 233.2"/><path d="M775.8 250.8L773.7 240.0"/><path d="M775.6 257.3L773.5 246.9"/><path d="M775.5 263.9L773.4 253.7"/><path d="M775.4 270.5L773.3 260.5"/><path d="M775.4 277.1L773.6 268.4"/><path d="M775.3 283.7L773.9 276.3"/><path d="M775.2 290.3L774.2 284.2"/><path d="M775.2 296.8L774.2 290.9"/><path d="M775.1 303.4L774.1 297.6"/><path d="M775.1 310.0L774.1 304.3"/><path d="M775.0 316.6L774.0 311.0"/><path d="M775.0 323.2L774.0 317.7"/><path d="M775.0 329.8L774.0 324.4"/><path d="M775.0 336.3L774.0 331.1"/><path d="M775.0 342.9L774.0 337.8"/><path d="M775.0 349.5L774.0 344.5"/><path d="M805.0 201.5L807.7 195.5"/><path d="M805.0 206.3L807.8 200.6"/><path d="M805.0 211.0L807.9 205.7"/><path d="M805.0 215.8L807.9 210.8"/><path d="M805.0 220.6L808.0 215.8"/><path d="M805.0 225.4L808.1 220.9"/><path d="M805.0 230.1L808.2 226.0"/><path d="M805.0 234.9L808.3 231.0"/><path d="M805.0 239.7L808.4 236.0"/><path d="M805.0 244.4L808.5 241.0"/><path d="M805.0 249.2L808.6 245.9"/><path d="M805.0 254.0L808.7 250.9"/><path d="M805.0 258.8L808.8 256.0"/><path d="M805.0 263.5L808.8 261.3"/><path d="M805.0 268.3L808.8 266.5"/><path d="M805.0 273.1L808.8 271.6"/><path d="M805.0 277.9L808.8 276.7"/><path d="M805.0 282.6L808.8 281.7"/><path d="M805.0 287.4L808.8 286.8"/><path d="M805.0 292.2L808.8 292.0"/><path d="M805.0 296.9L808.8 297.3"/><path d="M805.0 301.7L808.8 302.5"/><path d="M805.0 306.5L808.8 307.8"/><path d="M805.0 311.3L808.8 312.8"/><path d="M805.0 316.0L808.8 317.9"/><path d="M805.0 320.8L808.8 322.8"/><path d="M805.0 325.6L808.9 327.7"/><path d="M805.0 330.3L809.0 332.5"/><path d="M805.0 335.1L809.2 337.4"/><path d="M805.0 339.9L809.3 342.2"/><path d="M805.0 344.7L809.5 347.0"/><path d="M805.0 349.4L809.6 351.9"/><path d="M805.0 354.2L809.8 356.7"/></g>
</svg>
<div class="a" style="left:492.3px;top:379px;width:504.7px;height:2px;background:#fafbfc"></div>
<div class="a" id="txt" style="left:492.3px;top:380.4px;width:504.7px;height:157.4px;background:#fff;border:.6px solid #e6eaee;border-top-color:#c2c6ca;overflow:hidden">
<span style="left:2.2px;top:-0.6px">f = 20.6478</span>
<span style="left:2.2px;top:9.9px">x0 = -0.0819</span>
<span style="left:2.2px;top:20.5px">y0 = -0.0792</span>
<span style="left:2.2px;top:31.0px">k0-k3 = 0</span>
<span style="left:43.9px;top:31.0px">0.000238</span>
<span style="left:85.9px;top:31.0px">-4.75e-007</span>
<span style="left:128.5px;top:31.0px">5.818e-011</span>
<span style="left:2.2px;top:41.6px">p1-p3 = 1.012e-005</span>
<span style="left:85.9px;top:41.6px">2.764e-006</span>
<span style="left:128.5px;top:41.6px">0</span>
<span style="left:2.2px;top:52.1px">b1-b2 = -3.668e-010</span>
<span style="left:85.9px;top:52.1px">4.805e-010</span>
<span style="left:2.2px;top:73.2px"><b style="font-weight:normal;letter-spacing:-.18px">Calibration(m/deg)</b></span>
<span style="left:4.2px;top:83.8px">ID</span>
<span style="left:56.7px;top:83.8px">Name</span>
<span style="left:138.2px;top:83.8px">x</span>
<span style="left:181.2px;top:83.8px">y</span>
<span style="left:222.9px;top:83.8px">z</span>
<span style="left:254.2px;top:83.8px">LeverArm</span>
<span style="left:315.2px;top:83.8px">omega</span>
<span style="left:361.2px;top:83.8px">phi</span>
<span style="left:399.2px;top:83.8px">kappa</span>
<span style="left:8.8px;top:94.3px">1</span>
<span style="left:58.5px;top:94.3px">Canon</span>
<span style="left:85.9px;top:94.3px">-1.2062</span>
<span style="left:129.8px;top:94.3px">3.1247</span>
<span style="left:172.4px;top:94.3px">0.6790</span>
<span style="left:214.4px;top:94.3px">4.5512</span>
<span style="left:260.8px;top:94.3px">2.1930706337</span>
<span style="left:344.6px;top:94.3px">2.5895529377</span>
<span style="left:429.2px;top:94.3px">5.4245065620</span>
<span style="left:2.2px;top:115.5px">Std</span>
<span style="left:4.2px;top:126.0px">ID</span>
<span style="left:56.7px;top:126.0px">Name</span>
<span style="left:132.5px;top:126.0px">Stdx</span>
<span style="left:174.5px;top:126.0px">Stdy</span>
<span style="left:216.2px;top:126.0px">Stdz</span>
<span style="left:260.8px;top:126.0px">Std</span>
<span style="left:306.8px;top:126.0px">Std_omega</span>
<span style="left:395.2px;top:126.0px">Std_phi</span>
<span style="left:433.7px;top:126.0px">Std_kappa</span>
<span style="left:8.8px;top:136.6px">1</span>
<span style="left:58.5px;top:136.6px">Canon</span>
<span style="left:88.6px;top:136.6px">2.2299</span>
<span style="left:129.8px;top:136.6px">2.2504</span>
<span style="left:172.4px;top:136.6px">1.5660</span>
<span style="left:214.4px;top:136.6px">3.5340</span>
<span style="left:260.8px;top:136.6px">5.3640377276</span>
<span style="left:344.6px;top:136.6px">3.5093104384</span>
<span style="left:427.1px;top:136.6px">93.6883530721</span>
</div>
<div class="a" style="left:987.3px;top:381px;width:9.2px;height:156px;background:#f0f0f0"></div>
<div class="a" style="left:987.8px;top:421px;width:8.2px;height:53.5px;border:.6px solid #9a9a9a;border-radius:1.5px;background:linear-gradient(90deg,#f6f6f6,#dcdcdc)"></div>
<div class="a" style="left:990.3px;top:446px;width:3.4px;height:3.4px;background:repeating-linear-gradient(180deg,#7a7a7a 0 .6px,transparent .6px 1.2px)"></div>
<svg class="a" style="left:989.4px;top:384.4px" width="5" height="4" viewBox="0 0 5 4"><path d="M.6 3L2.5 1L4.4 3Z" fill="#444"/></svg>
<svg class="a" style="left:989.4px;top:531.4px" width="5" height="4" viewBox="0 0 5 4"><path d="M.6 1L2.5 3L4.4 1Z" fill="#444"/></svg>
</body></html>
